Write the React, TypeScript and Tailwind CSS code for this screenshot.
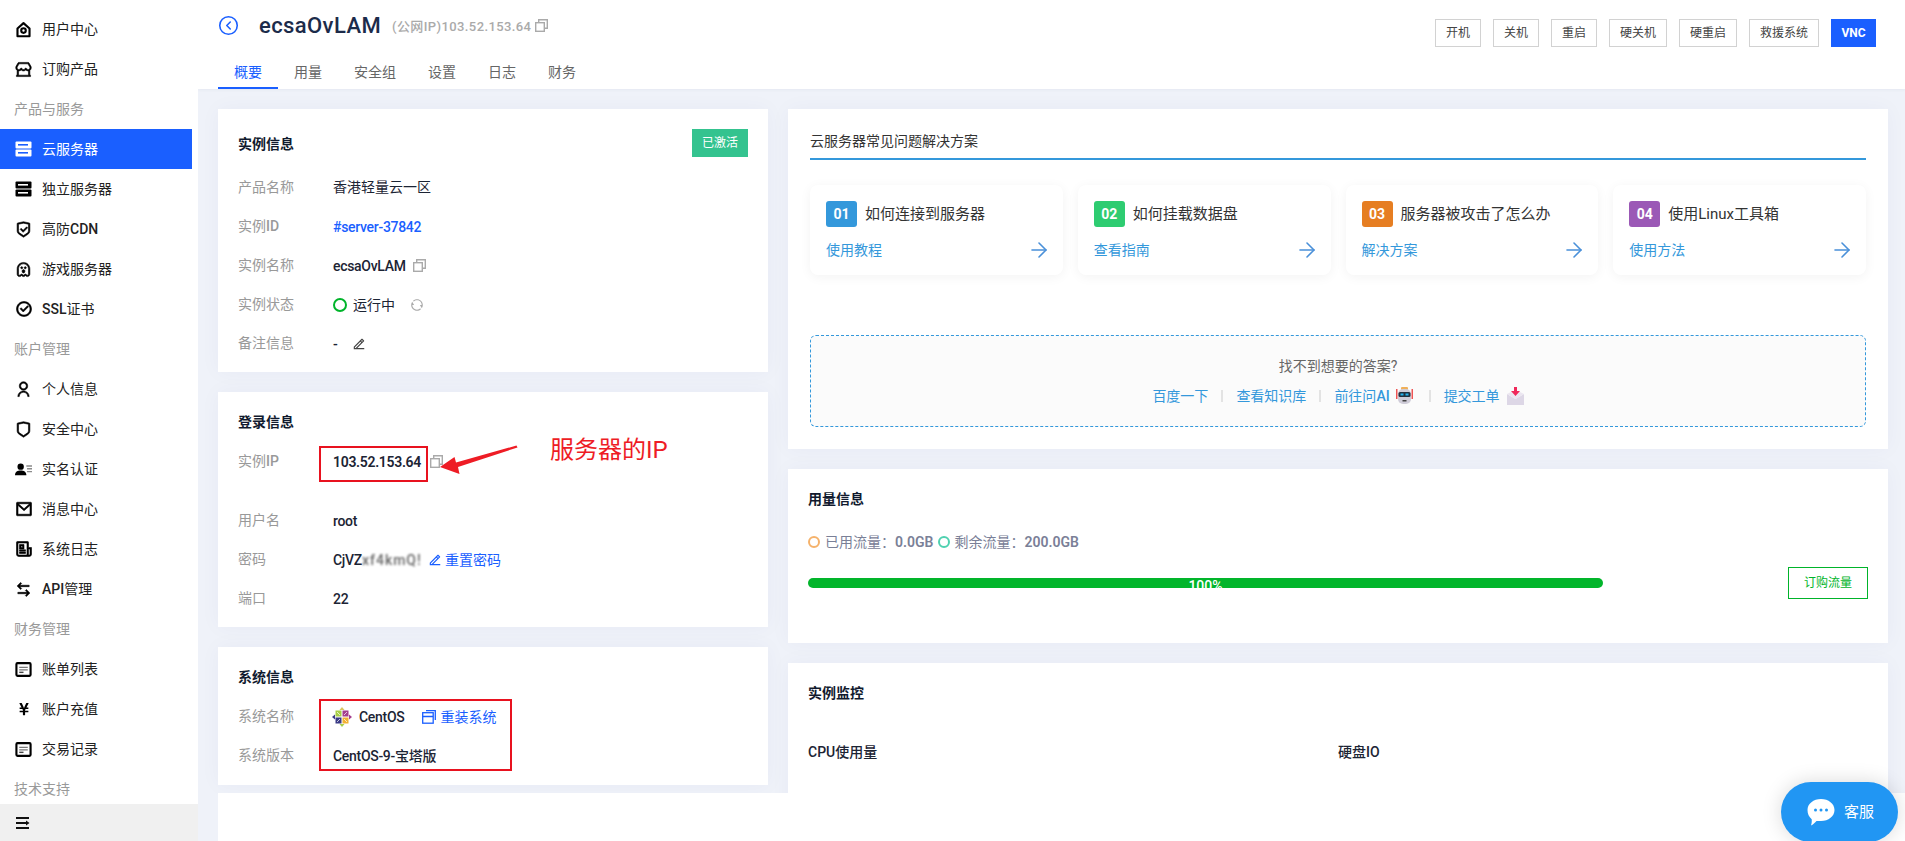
import React from "react";
import { CircleChevronLeft, ArrowRight } from "lucide-react";
import { FaYenSign } from "react-icons/fa";
import {
  RiStore2Line, RiShieldCheckLine, RiGhostLine, RiCheckboxCircleLine,
  RiUserLine, RiShieldLine, RiMailLine, RiNewspaperLine, RiArrowLeftRightLine,
  RiRefreshLine, RiEdit2Line,
} from "react-icons/ri";

function CopyIcon({ className }: { className?: string }) {
  return (
    <svg width="13" height="13" viewBox="0 0 13 13" fill="none" stroke="currentColor" strokeWidth="1.400" className={"shrink-0 " + (className ?? "")}>
      <rect x="0.700" y="3.700" width="8.600" height="8.600" />
      <path d="M3.700 3.500V0.700h8.600v8.600H9.500" />
    </svg>
  );
}
function HomeIcon() {
  return (
    <svg width="17" height="17" viewBox="0 0 24 24" fill="none" stroke="currentColor" strokeWidth="3">
      <path d="M3.500 10.500 12 3l8.500 7.500V21.500h-17z" strokeLinejoin="round" />
      <circle cx="12" cy="13.500" r="3.200" />
    </svg>
  );
}
function ServerIcon({ slit }: { slit: string }) {
  return (
    <svg width="17" height="16" viewBox="0 0 17 16" className="shrink-0">
      <rect x="0.500" y="0.500" width="16" height="7" rx="1" fill="currentColor" />
      <rect x="0.500" y="8.500" width="16" height="7" rx="1" fill="currentColor" />
      <rect x="3" y="3" width="10" height="1.600" fill={slit} />
      <rect x="3" y="11" width="10" height="1.600" fill={slit} />
    </svg>
  );
}
function ContactIcon() {
  return (
    <svg width="17" height="17" viewBox="0 0 24 24">
      <circle cx="8" cy="8" r="4.500" fill="currentColor" />
      <path d="M0 20c0-4.500 3.500-6.500 8-6.500s8 2 8 6.500z" fill="currentColor" />
      <path d="M16 7h8M17 11h7M17 15h7" stroke="#8b8b8b" strokeWidth="2" />
    </svg>
  );
}
function BillIcon() {
  return (
    <svg width="17" height="17" viewBox="0 0 24 24" fill="none">
      <rect x="2" y="3" width="20" height="18" rx="1.500" stroke="currentColor" strokeWidth="3" />
      <path d="M6 9h12M6 12.500h12" stroke="#777" strokeWidth="2" />
      <path d="M6 16h6" stroke="#444" strokeWidth="2" />
    </svg>
  );
}
function CollapseIcon() {
  return (
    <svg width="14" height="12" viewBox="0 0 14 12" className="shrink-0">
      <rect x="0" y="0" width="13" height="2" fill="#111" />
      <rect x="0" y="5" width="10" height="2" fill="#111" />
      <path d="M10 3.500 13.500 6 10 8.500z" fill="#111" />
      <rect x="0" y="10" width="13" height="2" fill="#111" />
    </svg>
  );
}
function CentOSLogo() {
  return (
    <svg width="20" height="20" viewBox="0 0 20 20" className="shrink-0">
      <rect x="3.500" y="3.500" width="6" height="6" fill="#a8cf45" />
      <rect x="10.500" y="3.500" width="6" height="6" fill="#a43e8e" />
      <rect x="10.500" y="10.500" width="6" height="6" fill="#f2b134" />
      <rect x="3.500" y="10.500" width="6" height="6" fill="#3a3a85" />
      <path d="M5 5l3 3M15 5l-3 3M15 15l-3-3M5 15l3-3" stroke="#fff" strokeWidth="1" opacity="0.7" />
      <path d="M10 0 7.500 3h5z" fill="#d9c560" />
      <path d="M20 10 17 7.500v5z" fill="#a43e8e" />
      <path d="M10 20 12.500 17h-5z" fill="#a8cf45" />
      <path d="M0 10 3 12.500v-5z" fill="#3a3a85" />
    </svg>
  );
}
function RobotIcon() {
  return (
    <svg width="17" height="18" viewBox="0 0 17 18" className="shrink-0">
      <rect x="0" y="2" width="1.500" height="10" fill="#e55" />
      <rect x="15.500" y="2" width="1.500" height="10" fill="#e55" />
      <rect x="5" y="0" width="7" height="3" rx="1" fill="#f0b05a" />
      <rect x="2" y="2" width="13" height="15" rx="5" fill="#cfccd8" />
      <rect x="2.500" y="5" width="12" height="5" rx="1.500" fill="#22303f" />
      <rect x="4.500" y="6.500" width="3" height="2" fill="#25b4f0" />
      <rect x="9.500" y="6.500" width="3" height="2" fill="#25b4f0" />
      <rect x="6.500" y="13" width="4" height="1.500" fill="#444" />
    </svg>
  );
}
function InboxIcon() {
  return (
    <svg width="17" height="18" viewBox="0 0 17 18" className="shrink-0">
      <path d="M0 7l8.500 5L17 7v11H0z" fill="#ddd7e6" />
      <path d="M0 7l4-2h9l4 2-8.500 5z" fill="#ebe6f0" />
      <path d="M7 0h3v4h3l-4.500 5L4 4h3z" fill="#f0285a" />
    </svg>
  );
}
function ChatIcon() {
  return (
    <svg width="28" height="28" viewBox="0 0 28 28">
      <path d="M14 1c7.500 0 13.500 4.700 13.500 11S21.500 23 14 23c-1.500 0-3 .1-4.500 0-1.500 1.800-3.500 3.500-5.500 4.500.7-2 .9-4.300.7-6.300C2 19 .5 15.800.5 12 .5 5.700 6.500 1 14 1z" fill="#fff" />
      <circle cx="8.500" cy="12" r="1.500" fill="#2196f3" />
      <circle cx="14" cy="12" r="1.500" fill="#2196f3" />
      <circle cx="19.500" cy="12" r="1.500" fill="#2196f3" />
    </svg>
  );
}
function ReinstallIcon() {
  return (
    <svg width="14" height="14" viewBox="0 0 14 14" fill="none" stroke="#1a5fff" strokeWidth="1.300" className="shrink-0">
      <rect x="0.700" y="2.700" width="10.500" height="10.500" />
      <path d="M0.700 6.500h10.500M4 .7h9.300V10" />
    </svg>
  );
}

function Mixed({ t }: { t: string }) {
  return (
    <>
      {t.split(/([A-Za-z]+)/).map((p, i) =>
        /[A-Za-z]/.test(p) ? <span key={i} className="font-medium">{p}</span> : p
      )}
    </>
  );
}

const thick = { stroke: "currentColor", strokeWidth: 0.8 };
type NavEntry = { t: string; icon?: React.ReactNode; head?: boolean; active?: boolean };
const nav: NavEntry[] = [
  { t: "用户中心", icon: <HomeIcon /> },
  { t: "订购产品", icon: <RiStore2Line size={17} {...thick} /> },
  { t: "产品与服务", head: true },
  { t: "云服务器", icon: <ServerIcon slit="#1a5fff" />, active: true },
  { t: "独立服务器", icon: <ServerIcon slit="#fff" /> },
  { t: "高防CDN", icon: <RiShieldCheckLine size={17} {...thick} /> },
  { t: "游戏服务器", icon: <RiGhostLine size={17} {...thick} /> },
  { t: "SSL证书", icon: <RiCheckboxCircleLine size={18} {...thick} /> },
  { t: "账户管理", head: true },
  { t: "个人信息", icon: <RiUserLine size={17} {...thick} /> },
  { t: "安全中心", icon: <RiShieldLine size={17} {...thick} /> },
  { t: "实名认证", icon: <ContactIcon /> },
  { t: "消息中心", icon: <RiMailLine size={18} {...thick} /> },
  { t: "系统日志", icon: <RiNewspaperLine size={18} {...thick} /> },
  { t: "API管理", icon: <RiArrowLeftRightLine size={17} {...thick} /> },
  { t: "财务管理", head: true },
  { t: "账单列表", icon: <BillIcon /> },
  { t: "账户充值", icon: <FaYenSign size={14} className="ml-[2px]" /> },
  { t: "交易记录", icon: <BillIcon /> },
  { t: "技术支持", head: true },
];

function Sidebar() {
  return (
    <aside className="w-[198px] h-[841px] shrink-0 bg-white flex flex-col">
      <div className="flex-1 min-h-0 overflow-hidden pt-[9px]">
        {nav.map((n) =>
          n.head ? (
            <div key={n.t} className="h-10 flex items-center pl-[14px] text-sm text-[#999]">{n.t}</div>
          ) : (
            <div
              key={n.t}
              className={
                n.active
                  ? "w-[192px] h-10 flex items-center bg-[#1a5fff] text-white text-sm"
                  : "w-[192px] h-10 flex items-center text-[#222] text-sm"
              }
            >
              <span className={n.active ? "w-[42px] pl-[15px] flex text-white" : "w-[42px] pl-[15px] flex text-black"}>{n.icon}</span>
              <span><Mixed t={n.t} /></span>
            </div>
          )
        )}
      </div>
      <div className="h-[37px] shrink-0 bg-[#f0f0f0] flex items-center pl-[16px] text-black">
        <CollapseIcon />
      </div>
    </aside>
  );
}

const actions = ["开机", "关机", "重启", "硬关机", "硬重启", "救援系统"];
const tabs = ["概要", "用量", "安全组", "设置", "日志", "财务"];

function Header() {
  return (
    <header className="h-[89px] shrink-0 bg-white pl-5 pr-[29px] shadow-[0_1px_3px_rgba(30,50,100,0.05)]">
      <div className="h-[58px] flex items-start justify-between">
        <div className="h-[50px] flex items-center">
          <CircleChevronLeft size={21} strokeWidth={1.8} className="text-[#1a5fff]" />
          <span className="ml-[20px] text-[22px] font-medium tracking-[0.4px] text-[#1c2b4a]">ecsaOvLAM</span>
          <span className="ml-[11px] mt-[3px] text-[13px] font-medium tracking-[0.4px] text-[#aaa]">(公网IP)103.52.153.64</span>
          <CopyIcon className="ml-[4px] text-[#aaa]" />
        </div>
        <div className="flex gap-3 pt-[19px]">
          {actions.map((a) => (
            <button key={a} className="h-7 px-[10px] border border-[#d2d2d2] text-xs text-[#444] bg-white">{a}</button>
          ))}
          <button className="h-7 w-[45px] bg-[#1a5fff] text-white text-xs font-bold">VNC</button>
        </div>
      </div>
      <nav className="flex h-[31px]">
        {tabs.map((t, i) => (
          <div
            key={t}
            className={
              i === 0
                ? "px-4 h-[31px] leading-[29px] text-sm text-[#1a5fff] border-b-2 border-[#1a5fff]"
                : "px-4 h-[31px] leading-[29px] text-sm text-[#666]"
            }
          >
            {t}
          </div>
        ))}
      </nav>
    </header>
  );
}

function Row({ label, children, cls }: { label: string; children: React.ReactNode; cls?: string }) {
  return (
    <div className={"relative flex items-start text-sm " + (cls ?? "h-[39px]")}>
      <div className="w-[95px] shrink-0 leading-[39px] text-[#999]"><Mixed t={label} /></div>
      <div className="h-[39px] flex items-center text-[#1c2434] font-medium text-sm tracking-[-0.3px]">{children}</div>
    </div>
  );
}
const cardCls = "bg-white px-5 shadow-[0_0_20px_rgba(40,60,120,0.04)]";
const titleCls = "text-sm font-bold text-[#111a2e] leading-5";

function LeftColumn() {
  return (
    <div className="w-[550px] shrink-0 flex flex-col gap-5">
      <section className={cardCls + " h-[263px] pt-5"}>
        <div className="flex items-center justify-between h-7 mb-[11px]">
          <h3 className={titleCls + " mt-[2px]"}>实例信息</h3>
          <span className="w-14 h-7 bg-[#34c38f] text-white text-xs flex items-center justify-center">已激活</span>
        </div>
        <Row label="产品名称"><span className="font-normal tracking-normal -mt-[2px]">香港轻量云一区</span></Row>
        <Row label="实例ID"><span className="text-[#1a5fff]">#server-37842</span></Row>
        <Row label="实例名称">
          <span>ecsaOvLAM</span>
          <CopyIcon className="ml-[7px] text-[#aaa]" />
        </Row>
        <Row label="实例状态">
          <span className="w-[14px] h-[14px] rounded-full border-2 border-[#00b42a]" />
          <span className="ml-[6px] font-normal tracking-normal">运行中</span>
          <RiRefreshLine size={14} className="ml-[15px] text-[#aaa]" />
        </Row>
        <Row label="备注信息">
          <span>-</span>
          <RiEdit2Line size={14} className="ml-[15px] text-[#444]" />
        </Row>
      </section>

      <section className={cardCls + " h-[235px] pt-5"}>
        <h3 className={titleCls + " mb-[10px]"}>登录信息</h3>
        <Row label="实例IP" cls="h-[59px]">
          <span className="font-semibold">103.52.153.64</span>
          <CopyIcon className="ml-[9px] text-[#aaa]" />
          <span className="absolute left-[81px] top-[4px] w-[109px] h-[36px] border-2 border-[#e8121f]" />
          <svg width="80" height="30" viewBox="0 0 80 30" className="absolute left-[201px] top-[3px]">
            <path d="M1 22 15.500 12 17 17.500 77.500 0.500 78.500 2.500 19 22 20.500 29Z" fill="#ee1c25" />
          </svg>
          <span className="absolute left-[312px] top-[-8px] text-2xl leading-8 font-normal tracking-normal text-[#ee1c25] whitespace-nowrap">服务器的IP</span>
        </Row>
        <Row label="用户名"><span>root</span></Row>
        <Row label="密码">
          <span>CjVZ</span>
          <span className="blur-[1.2px] w-[60px] overflow-hidden text-[#666] whitespace-nowrap tracking-[1px]">xf4kmQ!</span>
          <RiEdit2Line size={14} className="ml-[6px] text-[#1a5fff]" />
          <span className="ml-[3px] font-normal tracking-normal text-[#1a5fff]">重置密码</span>
        </Row>
        <Row label="端口"><span>22</span></Row>
      </section>

      <section className={cardCls + " h-[138px] pt-5"}>
        <h3 className={titleCls + " mb-[10px]"}>系统信息</h3>
        <Row label="系统名称">
          <span className="ml-[-1px]"><CentOSLogo /></span>
          <span className="ml-[7px]">CentOS</span>
          <span className="ml-[18px]"><ReinstallIcon /></span>
          <span className="ml-[4px] font-normal tracking-normal text-[#1a5fff]">重装系统</span>
          <span className="absolute left-[81px] top-[2px] w-[193px] h-[72px] border-2 border-[#e8121f]" />
        </Row>
        <Row label="系统版本"><span>CentOS-9-宝塔版</span></Row>
      </section>
    </div>
  );
}

const faqs = [
  { n: "01", c: "bg-[#3498db]", t: "如何连接到服务器", l: "使用教程" },
  { n: "02", c: "bg-[#2ecc71]", t: "如何挂载数据盘", l: "查看指南" },
  { n: "03", c: "bg-[#e67e22]", t: "服务器被攻击了怎么办", l: "解决方案" },
  { n: "04", c: "bg-[#9b59b6]", t: "使用Linux工具箱", l: "使用方法" },
];

function Sep() {
  return <span className="w-[2px] h-3 bg-[#e3e3e3] mx-[13px]" />;
}

function RightColumn() {
  return (
    <div className="w-[1100px] shrink-0 flex flex-col gap-5">
      <section className={cardCls + " !px-[22px] h-[340px] pt-[22px]"}>
        <div className="leading-5 text-sm text-[#333] pb-[7px] border-b-2 border-[#3498db]">云服务器常见问题解决方案</div>
        <div className="mt-[25px] grid grid-cols-4 gap-[15px]">
          {faqs.map((f) => (
            <div key={f.n} className="h-[90px] rounded-lg bg-white px-4 pt-4 shadow-[0_2px_12px_rgba(0,0,0,0.05)]">
              <div className="flex items-center">
                <span className={"w-[31px] h-[26px] rounded-[3px] text-white text-sm font-bold flex items-center justify-center " + f.c}>{f.n}</span>
                <span className="ml-2 text-[15px] text-[#333]">{f.t}</span>
              </div>
              <div className="mt-[13px] h-5 flex items-center justify-between leading-5 text-sm text-[#3498db]">
                <span>{f.l}</span>
                <ArrowRight size={24} strokeWidth={1.6} className="-mr-1 text-[#4a90d9]" />
              </div>
            </div>
          ))}
        </div>
        <div className="mt-[60px] h-[92px] rounded-md border border-dashed border-[#3498db] bg-[#fbfbfb] pt-5 text-center text-sm">
          <div className="leading-5 text-[#666]">找不到想要的答案?</div>
          <div className="mt-[10px] h-5 flex items-center justify-center text-[#3498db]">
            <span>百度一下</span>
            <Sep />
            <span>查看知识库</span>
            <Sep />
            <span><Mixed t="前往问AI" /></span>
            <span className="ml-[6px] mr-[3px]"><RobotIcon /></span>
            <Sep />
            <span>提交工单</span>
            <span className="ml-[7px]"><InboxIcon /></span>
          </div>
        </div>
      </section>

      <section className={cardCls + " h-[174px] pt-5"}>
        <h3 className={titleCls}>用量信息</h3>
        <div className="mt-[23px] h-5 flex items-center text-sm text-[#7a8097]">
          <span className="w-3 h-3 rounded-full border-2 border-[#f5b26b]" />
          <span className="ml-[5px]">已用流量：</span>
          <span className="font-semibold">0.0GB</span>
          <span className="ml-[5px] w-3 h-3 rounded-full border-2 border-[#4fd1b0]" />
          <span className="ml-[4px]">剩余流量：</span>
          <span className="font-semibold">200.0GB</span>
        </div>
        <div className="mt-[15px] h-8 flex items-center justify-between">
          <div className="w-[795px] h-[10px] rounded-full overflow-hidden bg-[#02b52b] text-center text-white text-sm font-medium leading-[17px]">100%</div>
          <button className="w-20 h-8 border border-[#00b42a] text-xs text-[#00b42a] bg-white">订购流量</button>
        </div>
      </section>

      <section className={cardCls + " h-[200px] pt-5"}>
        <h3 className={titleCls}>实例监控</h3>
        <div className="mt-[39px] flex leading-5 text-sm font-medium text-[#1c2434]">
          <div className="w-[530px]">CPU使用量</div>
          <div>硬盘IO</div>
        </div>
      </section>
    </div>
  );
}

export default function App() {
  return (
    <div className="w-[1905px] h-[841px] overflow-hidden flex bg-[#eff2f9] font-[Roboto,'Noto_Sans_CJK_SC',sans-serif]">
      <Sidebar />
      <main className="relative flex-1 min-w-0 h-[841px] flex flex-col overflow-hidden">
        <Header />
        <div className="flex gap-5 pl-5 pt-5">
          <LeftColumn />
          <RightColumn />
        </div>
        <div className="absolute left-5 right-0 bottom-0 h-[48px] bg-white" />
        <div className="absolute right-[7px] top-[782px] w-[117px] h-[60px] rounded-[30px] bg-[#2196f3] shadow-[0_0_20px_rgba(0,0,0,0.15)] flex items-center pl-[26px] text-white text-[15px]">
          <ChatIcon />
          <span className="ml-[9px]">客服</span>
        </div>
      </main>
    </div>
  );
}
